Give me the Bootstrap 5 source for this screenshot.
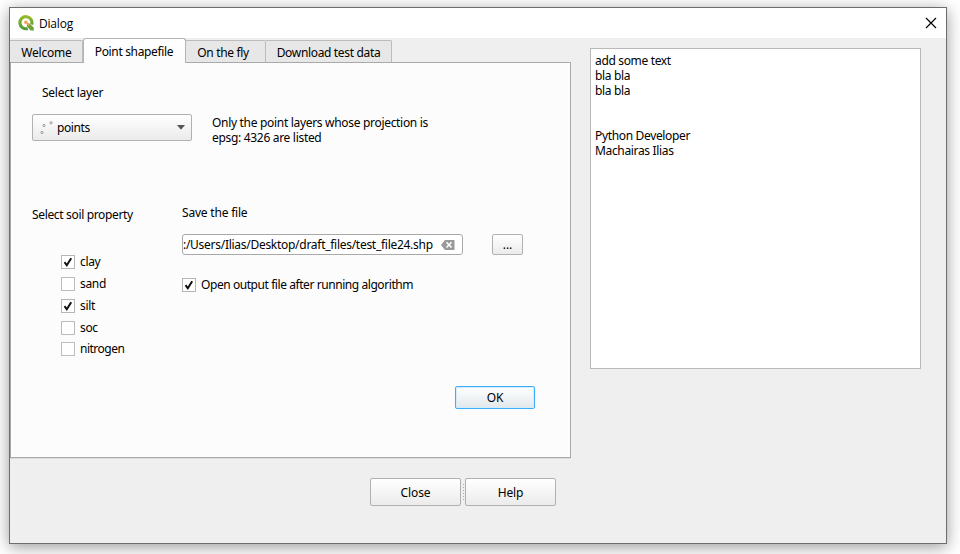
<!DOCTYPE html>
<html lang="en">
<head>
<meta charset="utf-8">
<title>Dialog</title>
<link href="https://cdn.jsdelivr.net/npm/bootstrap@5.3.0/dist/css/bootstrap.min.css" rel="stylesheet">
<style>
body{background:#fff;font:12px/15px "Noto Sans","Open Sans",sans-serif;letter-spacing:-.34px;color:#000;overflow:hidden;height:554px}
.dialog-window{width:938px;height:537px;margin:7px 0 0 9px;border:1px solid #6d6d6d;background:#efefef;box-shadow:0 3px 15px rgba(0,0,0,.4)}
.title-bar{height:30px;background:#fff;padding:0 9px 0 8px;font-family:"Open Sans",sans-serif;letter-spacing:-.2px}
.caption{margin-left:5px}
.left-side{width:561px}
.nav-tabs{--bs-nav-tabs-border-width:0;height:25px;position:relative;z-index:1;margin-bottom:-1px}
.nav-tabs .nav-link{height:22px;margin:0 0 1px;padding:3px 0 0;border:1px solid #bcbcbc;border-left-width:0;border-bottom:0;border-radius:0 2px 0 0;background:#e7e7e7;color:#000;text-align:center;line-height:17px}
.nav-tabs .nav-link.active{height:25px;margin:0;padding:4px 1px 0 0;border:1px solid #b4b4b4;border-bottom:0;border-radius:3px 3px 0 0;background:linear-gradient(#fff,#fcfcfc);color:#000}
.nav-tabs .tab-w{width:73px;padding-left:1px;letter-spacing:-.2px}.tab-p{width:103px}.nav-tabs .tab-f{width:80px;padding-right:5px}.tab-d{width:126px}
.pane{height:396px;border:1px solid #a9a9a9;background:#fcfcfc;padding:22px 0 0 21px;box-shadow:0 1px #dcdcdc}
.layer-label{margin-left:10px;letter-spacing:-.25px}
.layer-row{margin-top:14px}
.layer-hint{margin:1px 0 0 20px;letter-spacing:-.31px}
.options-row{margin-top:60px}
.ctl{border:1px solid #b1b1b1;border-radius:2px;background:linear-gradient(#fff,#ebebeb);color:#000;font-size:12px;line-height:15px;padding:0;letter-spacing:-.1px}
.ctl:hover{color:#000}
.combo{width:160px;height:27px;margin-bottom:1px;padding:0 5px 0 7px;letter-spacing:-.4px}
.soil-col{width:150px}
.soil-label{margin-top:2px}
.soil-list{margin:32px 0 0 29px;gap:7px}
.soil-list .check-row:last-child{margin-top:-1px;letter-spacing:-.5px}
.save-label{letter-spacing:-.2px}
.path-row{margin-top:14px;gap:29px}
.path-box{width:281px;height:21px;border:1px solid #a9a9a9;border-radius:3px;background:#fff;padding:0 7px 0 0;letter-spacing:-.28px;white-space:nowrap}
.path-box svg{flex:none}
.browse{width:31px;height:21px}
.check-row{height:15px;gap:5px}
.open-row{margin-top:22px;letter-spacing:-.43px}
.form-check-input.box{width:14px;height:14px;margin:0;border:1px solid #bdbdbd;border-radius:0;background-color:#fff;box-shadow:none;flex:none}
.form-check-input.box:checked{background-color:#fff;border-color:#b5b5b5;background-size:12px 12px;background-image:url("data:image/svg+xml,%3Csvg xmlns='http://www.w3.org/2000/svg' viewBox='0 0 12 12'%3E%3Cpath d='M2.5 6.2 4.8 9.3 9.2 2.3' fill='none' stroke='%23111' stroke-width='2'/%3E%3C/svg%3E")}
.ok-row{margin:30px 35px 0 0}
.ok-btn{width:80px;height:23px;border-color:#3daefd;background:linear-gradient(#fff,#e2e8eb);box-shadow:inset 0 0 0 1px #d5ecfb}
.footer-row{margin:20px 15px 0 0}
.wide-btn{width:91px;height:28px}
.grip{width:1px;height:17px;margin:0 1px 0 2px;background:repeating-linear-gradient(#aaa 0 1px,transparent 1px 3px)}
.notes{width:331px;height:321px;border:1px solid #b9b9b9;border-radius:0;background:#fff;margin:10px 0 0 19px;padding:4px}
</style>
</head>
<body>
<main class="dialog-window">
  <header class="title-bar d-flex align-items-center">
    <svg width="16" height="16" viewBox="0 0 16 16"><defs><linearGradient id="g" y2="1" x2="0"><stop stop-color="#94b92b"/><stop offset="1" stop-color="#559a3a"/></linearGradient></defs><path d="M9.8 13.4A6 6 0 1 1 13.6 9.6" fill="none" stroke="url(#g)" stroke-width="3.2"/><path d="M9.3 8.6h2.4l4.1 4.2v2.8h-3.2L8.6 11z" fill="#6ca338"/><path d="M6.3 5.8h3.2v1.7l2.4 2.4-1.2 1.2-2.4-2.4h-2z" fill="#f0a057"/></svg>
    <span class="caption">Dialog</span>
    <svg class="ms-auto" width="12" height="12" viewBox="0 0 12 12"><path d="M1 1l10 10M11 1 1 11" stroke="#000" stroke-width="1.2"/></svg>
  </header>
  <div class="d-flex">
    <section class="left-side">
      <nav class="nav nav-tabs flex-nowrap align-items-end">
        <a class="nav-link tab-w">Welcome</a><a class="nav-link active tab-p">Point shapefile</a><a class="nav-link tab-f">On the fly</a><a class="nav-link tab-d">Download test data</a>
      </nav>
      <div class="pane">
        <div class="layer-label">Select layer</div>
        <div class="layer-row d-flex">
          <button class="btn ctl combo d-flex align-items-center">
            <svg width="13" height="14" viewBox="0 0 13 14" fill="none" stroke="#999"><circle cx="2" cy="11.5" r="1.1"/><circle cx="4" cy="4.5" r="1.1"/><circle cx="11" cy="1.8" r="1.1"/></svg>
            <span class="ms-1">points</span>
            <svg class="ms-auto" width="10" height="5" viewBox="0 0 10 5"><path d="M1 0h8L5 4.8z" fill="#555"/></svg>
          </button>
          <div class="layer-hint">Only the point layers whose projection is<br>epsg: 4326 are listed</div>
        </div>
        <div class="options-row d-flex">
          <div class="soil-col">
            <div class="soil-label">Select soil property</div>
            <div class="soil-list d-flex flex-column">
              <label class="check-row d-flex align-items-center"><input class="form-check-input box" type="checkbox" checked>clay</label>
              <label class="check-row d-flex align-items-center"><input class="form-check-input box" type="checkbox">sand</label>
              <label class="check-row d-flex align-items-center"><input class="form-check-input box" type="checkbox" checked>silt</label>
              <label class="check-row d-flex align-items-center"><input class="form-check-input box" type="checkbox">soc</label>
              <label class="check-row d-flex align-items-center"><input class="form-check-input box" type="checkbox">nitrogen</label>
            </div>
          </div>
          <div>
            <div class="save-label">Save the file</div>
            <div class="path-row d-flex">
              <div class="path-box d-flex align-items-center"><span>:/Users/Ilias/Desktop/draft_files/test_file24.shp</span>
                <svg class="ms-auto" width="14" height="10" viewBox="0 0 14 10"><path d="M4 0h9.5v10H4L0 5z" fill="#999"/><path d="M5.5 2.2l5 5.4m0-5.4-5 5.4" stroke="#fff" stroke-width="1.5"/></svg>
              </div>
              <button class="btn ctl browse">...</button>
            </div>
            <label class="check-row open-row d-flex align-items-center"><input class="form-check-input box" type="checkbox" checked>Open output file after running algorithm</label>
          </div>
        </div>
        <div class="ok-row d-flex justify-content-end"><button class="btn ctl ok-btn">OK</button></div>
      </div>
      <div class="footer-row d-flex align-items-center justify-content-end"><button class="btn ctl wide-btn">Close</button><span class="grip"></span><button class="btn ctl wide-btn">Help</button></div>
    </section>
    <aside class="notes">add some text<br>bla bla<br>bla bla<br><br><br>Python Developer<br>Machairas Ilias</aside>
  </div>
</main>
<script src="https://cdn.jsdelivr.net/npm/bootstrap@5.3.0/dist/js/bootstrap.bundle.min.js"></script>
</body>
</html>
